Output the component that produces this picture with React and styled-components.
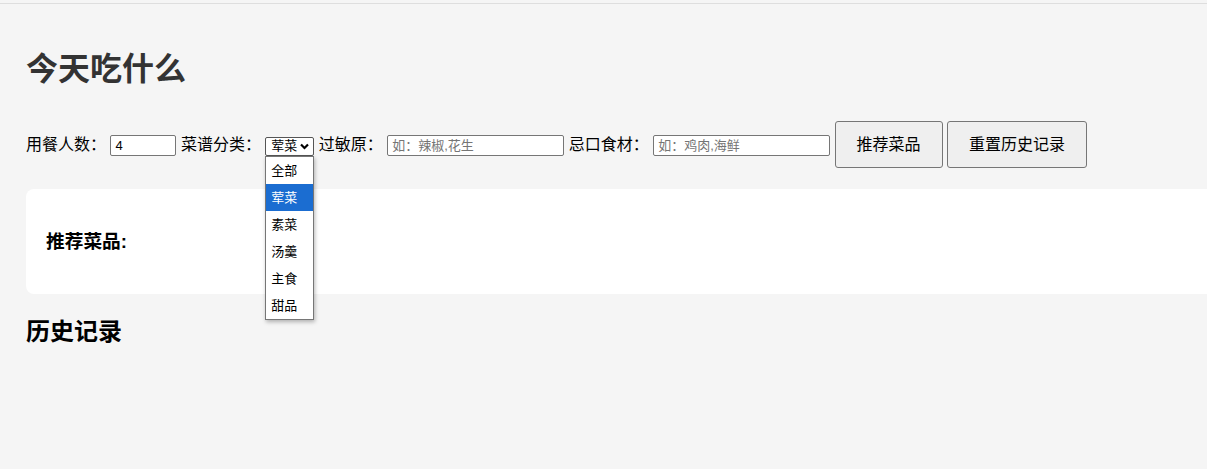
import React from 'react'
import styled, { createGlobalStyle } from 'styled-components'

const Global = createGlobalStyle`
  html, body {
    margin: 0;
    padding: 0;
    background: #f5f5f5;
    overflow: hidden;
  }
  body {
    font-family: "Liberation Sans", "Noto Sans CJK SC", sans-serif;
  }
`

const Page = styled.div`
  margin-top: 3px;
  border-top: 1px solid #dedede;
  padding: 0 26px;
  min-height: 465px;
`

const Title = styled.h1`
  margin: 42px 0 0;
  font-size: 32px;
  line-height: 46px;
  font-weight: bold;
  color: #333;
`

const Controls = styled.div`
  display: flex;
  align-items: baseline;
  gap: 4.45px;
  margin-top: 29px;
  font-size: 16px;
  color: #000;
`

const Label = styled.span`
  line-height: 20px;
`

const Input = styled.input`
  box-sizing: border-box;
  width: ${p => p.$w}px;
  height: 21px;
  padding: 1px 4px;
  border: 1px solid #767676;
  border-radius: 2px;
  background: #fff;
  font-family: "Liberation Sans", "Noto Sans CJK SC", sans-serif;
  font-size: 13px;
  color: #000;
  outline: none;
  &::placeholder {
    color: #757575;
  }
`

const SelectWrap = styled.div`
  position: relative;
  display: inline-flex;
`

const SelectBox = styled.div`
  box-sizing: border-box;
  display: inline-flex;
  align-items: baseline;
  gap: 3px;
  width: 49px;
  height: 19px;
  padding: 0 0 0 5px;
  border: 1px solid #555;
  border-radius: 2px;
  background: #fff;
  font-size: 13px;
  line-height: 16px;
`

const Chevron = styled.svg`
  width: 9px;
  height: 7px;
  align-self: center;
`

const Menu = styled.ul`
  position: absolute;
  top: 19px;
  left: 0;
  z-index: 10;
  box-sizing: border-box;
  width: 49px;
  margin: 0;
  padding: 0;
  list-style: none;
  background: #fff;
  border: 1px solid #767676;
  box-shadow: 1px 2px 4px rgba(0, 0, 0, 0.28);
`

const Option = styled.li`
  height: 27px;
  padding-left: 5px;
  font-size: 13px;
  line-height: 27px;
  color: ${p => (p.$active ? '#fff' : '#000')};
  background: ${p => (p.$active ? '#1b6dd1' : 'transparent')};
`

const Button = styled.button`
  padding: 11px 21px;
  border: 1px solid #767676;
  border-radius: 3px;
  background: #efefef;
  font-family: "Liberation Sans", "Noto Sans CJK SC", sans-serif;
  font-size: 16px;
  line-height: 23px;
  color: #000;
  cursor: pointer;
`

const Card = styled.div`
  width: 1200px;
  margin-top: 21px;
  padding: 20px;
  border-radius: 8px;
  background: #fff;
`

const CardTitle = styled.h3`
  margin: 19px 0;
  font-size: 18.72px;
  line-height: 27px;
  font-weight: bold;
`

const HistoryTitle = styled.h2`
  margin: 20px 0 0;
  font-size: 24px;
  line-height: 35px;
  font-weight: bold;
`

const categories = ['全部', '荤菜', '素菜', '汤羹', '主食', '甜品']

export default function App() {
  return (
    <Page>
      <Global />
      <Title>今天吃什么</Title>
      <Controls>
        <Label>用餐人数：</Label>
        <Input type="number" $w={66} defaultValue="4" />
        <Label>菜谱分类：</Label>
        <SelectWrap>
          <SelectBox>
            荤菜
            <Chevron viewBox="0 0 9 7">
              <path d="M1 1.5 L4.5 5 L8 1.5" fill="none" stroke="#000" strokeWidth="2.2" />
            </Chevron>
          </SelectBox>
          <Menu>
            {categories.map(c => (
              <Option key={c} $active={c === '荤菜'}>{c}</Option>
            ))}
          </Menu>
        </SelectWrap>
        <Label>过敏原：</Label>
        <Input $w={177} placeholder="如：辣椒,花生" />
        <Label>忌口食材：</Label>
        <Input $w={177} placeholder="如：鸡肉,海鲜" />
        <Button>推荐菜品</Button>
        <Button>重置历史记录</Button>
      </Controls>
      <Card>
        <CardTitle>推荐菜品:</CardTitle>
      </Card>
      <HistoryTitle>历史记录</HistoryTitle>
    </Page>
  )
}
